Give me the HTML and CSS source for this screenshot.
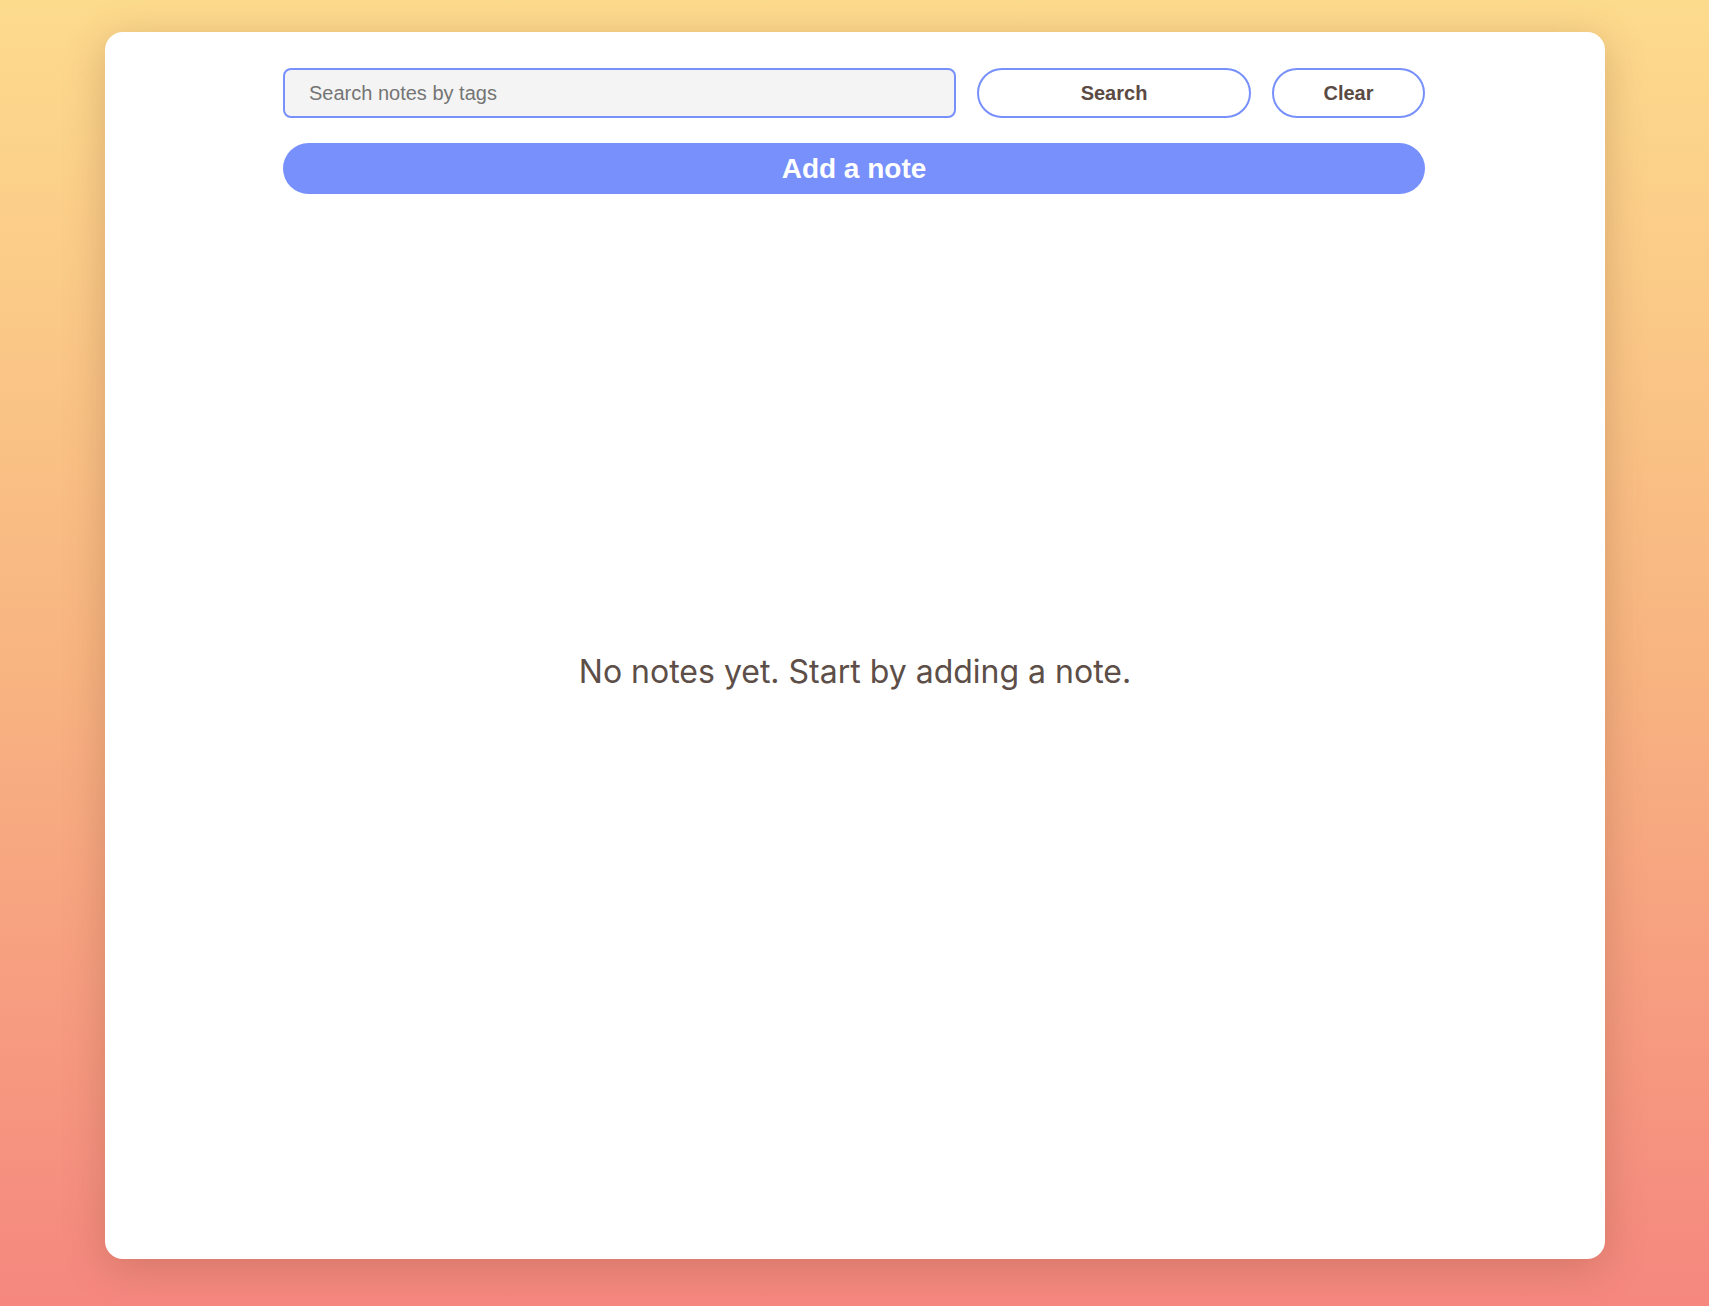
FILE: index.html
```html
<!DOCTYPE html>
<html lang="en">
<head>
<meta charset="utf-8">
<title>Notes</title>
<link rel="stylesheet" href="styles.css">
</head>
<body>
<main class="card">
  <div class="content">
    <div class="toolbar">
      <input class="search-input" type="text" placeholder="Search notes by tags">
      <button class="btn-outline btn-search">Search</button>
      <button class="btn-outline btn-clear">Clear</button>
    </div>
    <button class="btn-add">Add a note</button>
  </div>
  <section class="notes">
    <p class="empty">No notes yet. Start by adding a note.</p>
  </section>
</main>
</body>
</html>
```
FILE: styles.css
```css
* { box-sizing: border-box; }
html, body { margin: 0; height: 100%; }
body {
  background: linear-gradient(to bottom, #fddb8d 0%, #f8b581 50%, #f5877f 100%);
  padding: 32px 104px 47px 105px;
  font-family: "Liberation Sans", Arial, sans-serif;
}
.card {
  height: 1227px;
  background: #ffffff;
  border-radius: 18px;
  box-shadow: 0 8px 40px rgba(120, 70, 40, 0.28);
  padding-top: 36px;
  display: flex;
  flex-direction: column;
}
.content {
  width: 1142px;
  margin: 0 auto;
  transform: translateX(-1px);
}
.toolbar {
  display: flex;
  gap: 21px;
  height: 50px;
}
.search-input {
  width: 673px;
  height: 50px;
  border: 2px solid #7790fb;
  border-radius: 8px;
  background: #f4f4f4;
  padding: 0 24px;
  font-family: "Liberation Sans", Arial, sans-serif;
  font-size: 20px;
  color: #333;
  outline: none;
}
.search-input::placeholder { color: #757575; }
.btn-outline {
  height: 50px;
  border: 2px solid #7790fb;
  border-radius: 25px;
  background: #ffffff;
  color: #5b4a43;
  font-family: "Liberation Sans", Arial, sans-serif;
  font-weight: bold;
  font-size: 20px;
  cursor: pointer;
}
.btn-search { width: 274px; }
.btn-clear { width: 153px; }
.btn-add {
  display: block;
  width: 100%;
  height: 51px;
  margin-top: 25px;
  border: none;
  border-radius: 26px;
  background: #7790fc;
  color: #ffffff;
  font-family: "Liberation Sans", Arial, sans-serif;
  font-weight: bold;
  font-size: 28px;
  cursor: pointer;
}
.notes {
  flex: 1;
  display: flex;
  justify-content: center;
  padding-top: 460px;
}
.empty {
  margin: 0;
  font-family: Inter, "Noto Sans", sans-serif;
  font-size: 32px;
  line-height: 36px;
  color: #5d4e48;
}
```
